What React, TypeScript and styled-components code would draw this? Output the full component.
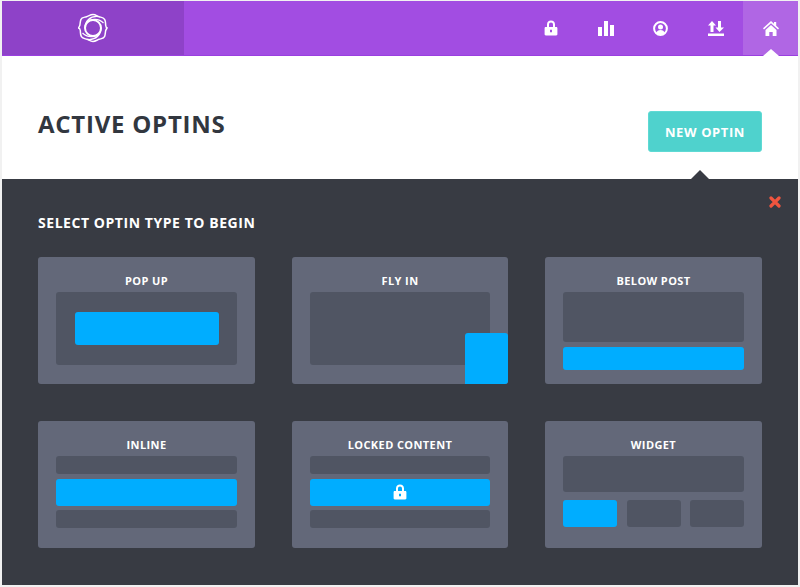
import React from "react";
import styled, { createGlobalStyle } from "styled-components";

const Global = createGlobalStyle`
  html, body { margin: 0; padding: 0; background: #f1f1f1; }
  body { font-family: "Open Sans", "Liberation Sans", sans-serif; }
  * { box-sizing: border-box; }
`;

const Page = styled.div`
  width: 800px;
  height: 587px;
  padding: 1px 2px 2px 2px;
  display: flex;
  flex-direction: column;
`;

const Header = styled.header`
  height: 55px;
  flex: none;
  display: flex;
  background: #a24de2;
  border-bottom: 1px solid #9a3fe0;
`;

const LogoPanel = styled.div`
  width: 182px;
  display: flex;
  align-items: center;
  justify-content: center;
  background: #8e42c8;
`;

const Nav = styled.nav`
  margin-left: auto;
  display: flex;
`;

const NavItem = styled.div<{ $active?: boolean }>`
  width: 55px;
  position: relative;
  display: flex;
  align-items: center;
  justify-content: center;
  background: ${(p) => (p.$active ? "#b066e4" : "transparent")};
  ${(p) =>
    p.$active &&
    `&::after {
      content: "";
      position: absolute;
      left: 50%;
      bottom: -1px;
      margin-left: -8px;
      border: 8px solid transparent;
      border-top: 0;
      border-bottom: 7px solid #fff;
    }`}
`;

const TitleBar = styled.section`
  height: 123px;
  flex: none;
  background: #fff;
  display: flex;
  align-items: flex-start;
  justify-content: space-between;
  padding: 52px 36px 0 36px;
`;

const Title = styled.h1`
  margin: 0;
  font-size: 24px;
  line-height: 32px;
  font-weight: 700;
  letter-spacing: 0.75px;
  color: #32373f;
`;

const NewButton = styled.button`
  width: 114px;
  height: 41px;
  margin-top: 3px;
  border: 1px solid #5fdad4;
  border-radius: 3px;
  background: #4fd2cd;
  color: #fff;
  font: 700 13px "Open Sans", sans-serif;
  letter-spacing: 0.6px;
  padding: 0;
  position: relative;
  &::after {
    content: "";
    position: absolute;
    left: 41px;
    top: 58px;
    border: 10px solid transparent;
    border-top: 0;
    border-bottom: 10px solid #383b43;
  }
`;

const Panel = styled.section`
  flex: 1;
  position: relative;
  background: #383b43;
  padding: 32px 36px 0 36px;
`;

const Close = styled.svg`
  position: absolute;
  top: 17px;
  right: 17px;
`;

const PanelTitle = styled.h2`
  margin: 0 0 23px;
  font-size: 14px;
  line-height: 23px;
  font-weight: 700;
  letter-spacing: 0.55px;
  color: #fff;
`;

const Grid = styled.div`
  display: grid;
  grid-template-columns: 217px 216px 217px;
  column-gap: 37px;
  row-gap: 37px;
  width: 724px;
`;

const Card = styled.div`
  position: relative;
  height: 127px;
  padding: 16px 18px 0;
  border-radius: 3px;
  background: #636879;
  overflow: hidden;
`;

const CardTitle = styled.div`
  text-align: center;
  font-size: 11px;
  line-height: 16px;
  margin-bottom: 3px;
  font-weight: 700;
  letter-spacing: 0.4px;
  color: #fff;
`;

const Stack = styled.div`
  display: flex;
  flex-direction: column;
  gap: 4.5px;
`;

const Block = styled.div<{ $h: number }>`
  height: ${(p) => p.$h}px;
  border-radius: 3px;
  background: #505563;
`;

const Modal = styled.div`
  height: 73px;
  border-radius: 3px;
  background: #505563;
  display: flex;
  align-items: center;
  justify-content: center;
`;

const BlueBar = styled.div<{ $h: number }>`
  height: ${(p) => p.$h}px;
  border-radius: 3px;
  background: #00adff;
  display: flex;
  align-items: center;
  justify-content: center;
`;

const PopUpBar = styled(BlueBar)`
  width: 144px;
`;

const FlyOut = styled.div`
  position: absolute;
  right: 0;
  bottom: 0;
  width: 43px;
  height: 51px;
  border-radius: 3px 3px 0 0;
  background: #00adff;
`;

const WidgetRow = styled.div`
  display: grid;
  grid-template-columns: repeat(3, 54px);
  justify-content: space-between;
  margin-top: 3px;
`;

const WidgetCell = styled.div<{ $on?: boolean }>`
  height: 27px;
  border-radius: 3px;
  background: ${(p) => (p.$on ? "#00adff" : "#505563")};
`;

const LockIcon = ({ size = 14 }: { size?: number }) => (
  <svg width={size} height={size * 16 / 14} viewBox="0 0 14 16">
    <path
      fill="#fff"
      fillRule="evenodd"
      d="M3 7V4.6C3 2.2 4.7.6 7 .6s4 1.6 4 4V7h1.2c.7 0 1.2.5 1.2 1.2v6c0 .7-.5 1.2-1.2 1.2H1.8C1.1 15.4.6 14.900.6 14.200v-6C.6 7.500 1.100 7 1.800 7H3zm2-2.300V7h4V4.700C9 3.400 8.200 2.600 7 2.600s-2 .8-2 2.100zM6 9.800v2.400h2V9.800H6z"
    />
  </svg>
);

const BarsIcon = () => (
  <svg width="16" height="15" viewBox="0 0 16 15">
    <path fill="#fff" d="M0 6h4v9H0zM6 0h4v15H6zM12 4h4v11h-4z" />
  </svg>
);

const UserIcon = () => (
  <svg width="15" height="15" viewBox="0 0 15 15">
    <circle cx="7.500" cy="7.500" r="6.400" fill="none" stroke="#fff" strokeWidth="2" />
    <circle cx="7.500" cy="6" r="2.500" fill="#fff" />
    <path fill="#fff" d="M3.200 12c.6-2 2.200-3 4.300-3s3.700 1 4.300 3c-1.100 1.200-2.600 1.900-4.300 1.900S4.300 13.200 3.200 12z" />
  </svg>
);

const SwapIcon = () => (
  <svg width="16" height="15" viewBox="0 0 16 15">
    <path
      fill="#fff"
      d="M4 0l4 4.500H5.500V11h-3V4.500H0zM10 0h3v6.500h3L11.500 11 7.500 6.500H10zM0 12.500h16V15H0z"
    />
  </svg>
);

const HomeIcon = () => (
  <svg width="16" height="15" viewBox="0 0 16 15">
    <path
      fill="#fff"
      d="M8 0l3 2.700V1h2.200v3.700L16 7.300l-1 1.100-7-6.200-7 6.200-1-1.100zM2.500 9L8 4l5.500 5v6H9.700v-4H6.300v4H2.500z"
    />
  </svg>
);

const Logo = () => (
  <svg width="30" height="30" viewBox="0 0 30 30" fill="none" stroke="#fff">
    <g strokeWidth="1.500">
      <path d="M15 1.500c2.500 0 4 1.500 6 2.200s4.300.6 5.600 2.700.8 4 1.100 6.100 1.300 2.500 1.300 2.500-1 1.700-1.300 2.500-.3 4-1.100 6.100-3.500 2-5.600 2.700-3.500 2.200-6 2.200-4-1.500-6-2.200-4.300-.6-5.600-2.700-.8-4-1.100-6.100S.5 15 .5 15s1-1.700 1.300-2.500.3-4 1.100-6.100 3.500-2 5.600-2.700 4-2.200 6.500-2.200z" />
      <circle cx="15" cy="15" r="8" strokeWidth="2" />
      <path d="M7 15C7 8 12 3 20 3.500M23 15c0 7-5 12-13 11.500M9 9.500C13 5 21 5.500 25.500 10M21 20.500C17 25 9 24.500 4.500 20" strokeWidth="1.300" />
    </g>
  </svg>
);

export default function App() {
  return (
    <>
      <Global />
      <Page>
        <Header>
          <LogoPanel>
            <Logo />
          </LogoPanel>
          <Nav>
            <NavItem><LockIcon /></NavItem>
            <NavItem><BarsIcon /></NavItem>
            <NavItem><UserIcon /></NavItem>
            <NavItem><SwapIcon /></NavItem>
            <NavItem $active><HomeIcon /></NavItem>
          </Nav>
        </Header>
        <TitleBar>
          <Title>ACTIVE OPTINS</Title>
          <NewButton>NEW OPTIN</NewButton>
        </TitleBar>
        <Panel>
          <Close width="12" height="12" viewBox="0 0 12 12">
            <path d="M2 2l8 8M10 2l-8 8" stroke="#f0553f" strokeWidth="3.200" strokeLinecap="round" />
          </Close>
          <PanelTitle>SELECT OPTIN TYPE TO BEGIN</PanelTitle>
          <Grid>
            <Card>
              <CardTitle>POP UP</CardTitle>
              <Modal><PopUpBar $h={33} /></Modal>
            </Card>
            <Card>
              <CardTitle>FLY IN</CardTitle>
              <Modal />
              <FlyOut />
            </Card>
            <Card>
              <CardTitle>BELOW POST</CardTitle>
              <Stack>
                <Block $h={50} />
                <BlueBar $h={23} />
              </Stack>
            </Card>
            <Card>
              <CardTitle>INLINE</CardTitle>
              <Stack>
                <Block $h={18} />
                <BlueBar $h={27} />
                <Block $h={18} />
              </Stack>
            </Card>
            <Card>
              <CardTitle>LOCKED CONTENT</CardTitle>
              <Stack>
                <Block $h={18} />
                <BlueBar $h={27}><LockIcon size={14} /></BlueBar>
                <Block $h={18} />
              </Stack>
            </Card>
            <Card>
              <CardTitle>WIDGET</CardTitle>
              <Stack>
                <Block $h={36} />
                <WidgetRow>
                  <WidgetCell $on />
                  <WidgetCell />
                  <WidgetCell />
                </WidgetRow>
              </Stack>
            </Card>
          </Grid>
        </Panel>
      </Page>
    </>
  );
}
